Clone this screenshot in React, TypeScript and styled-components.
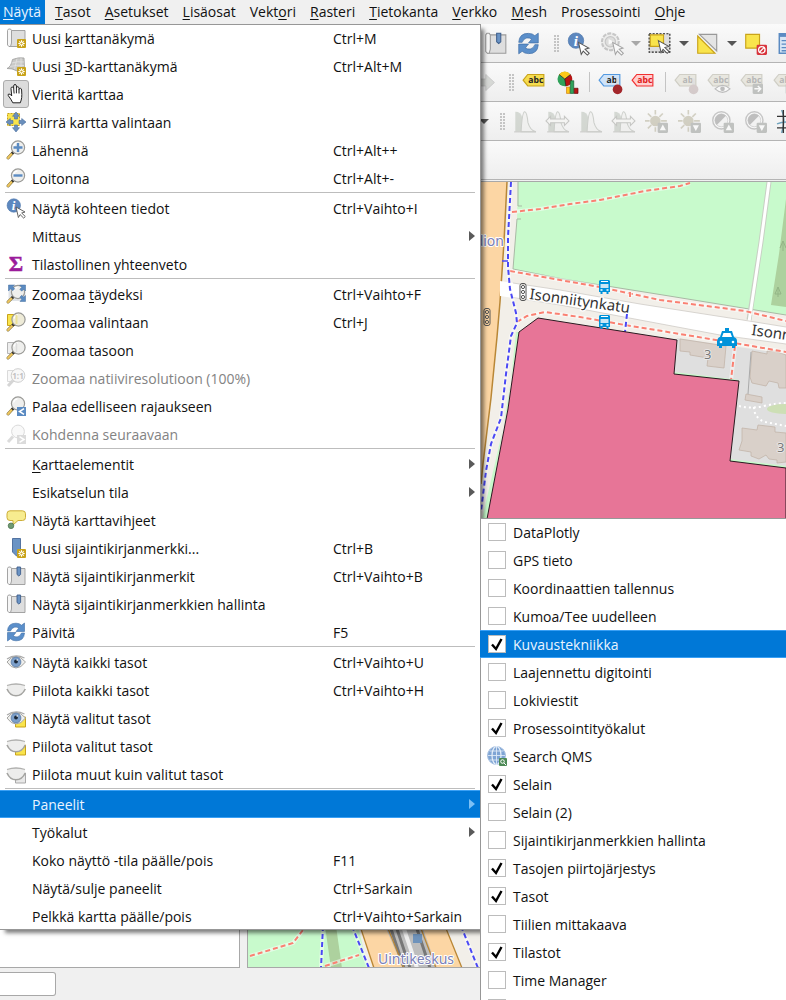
import React from "react";
import styled, { createGlobalStyle, css } from "styled-components";

const GlobalStyle = createGlobalStyle`
  *, *::before, *::after { box-sizing: border-box; }
  html, body { margin: 0; padding: 0; height: 100%; overflow: hidden; }
  body { background: #f0f0f0; }
  body, button, input {
    font-family: "Open Sans", "Noto Sans", sans-serif;
    font-size: 14px;
    line-height: 20px;
    color: #111;
  }
`;

/* ---------- Window frame ---------- */

const Window = styled.div`
  position: relative;
  display: flex;
  flex-direction: column;
  height: 100vh;
  overflow: hidden;
  background: #f0f0f0;
`;

const MenuBar = styled.nav`
  display: flex;
  flex: none;
  height: 24px;
  gap: 7px;
  background: #f0f0f0;
`;

const MenuBarItem = styled.button<{ $open?: boolean }>`
  border: 0;
  padding: 0 4px 0 ${(p) => (p.$open ? 3 : 3)}px;
  height: 24px;
  white-space: nowrap;
  background: ${(p) => (p.$open ? "#0078d7" : "transparent")};
  color: ${(p) => (p.$open ? "#e8f4ff" : "#111")};
`;

const Mark = styled.u`
  text-decoration-thickness: 1px;
  text-underline-offset: 2px;
`;

/* ---------- Toolbars ---------- */

const ToolBar = styled.div<{ $start: number }>`
  display: flex;
  flex: none;
  align-items: center;
  height: 39px;
  padding-left: ${(p) => p.$start}px;
  overflow: hidden;
  background: linear-gradient(#fafafa, #eeeeee);
  border-bottom: 1px solid #b4b4b4;
`;

const ToolButton = styled.button<{ $faded?: boolean }>`
  display: flex;
  flex: none;
  align-items: center;
  justify-content: center;
  width: 33px;
  height: 33px;
  padding: 0;
  border: 0;
  background: none;
  opacity: ${(p) => (p.$faded ? 0.5 : 1)};
`;

const DropArrow = styled.button<{ $faded?: boolean }>`
  display: flex;
  flex: none;
  align-items: center;
  justify-content: center;
  width: 15px;
  height: 33px;
  padding: 0;
  border: 0;
  background: none;
  &::before {
    content: "";
    border: 5px solid transparent;
    border-top-color: ${(p) => (p.$faded ? "#a8a8a8" : "#555")};
    border-bottom: 0;
  }
`;

const Grip = styled.span`
  flex: none;
  width: 17px;
  height: 17px;
  padding-left: 9px;
  padding-right: 3px;
  background: radial-gradient(circle at 1px 1px, #c4c4c4 1px, transparent 1px) content-box;
  background-size: 3px 3px;
`;

const ToolDivider = styled.span`
  flex: none;
  width: 10px;
  height: 20px;
  background: linear-gradient(#c4c4c4, #c4c4c4) 6px 0 / 1px 100% no-repeat;
`;

/* ---------- Work area ---------- */

const WorkArea = styled.main`
  display: flex;
  flex: 1;
  min-height: 0;
  gap: 7px;
  padding-top: 1px;
`;

const SidePanel = styled.aside`
  flex: none;
  width: 240px;
  background: #fff;
  border: 1px solid #a8a8a8;
  border-left: 0;
`;

const MapFrame = styled.section`
  flex: 1;
  min-width: 0;
  border: 1px solid #a8a8a8;
  border-right: 0;
  background: #f2efe9;
  svg { display: block; width: 100%; height: 100%; }
`;

const StatusBar = styled.footer`
  flex: none;
  height: 32px;
  padding-top: 4px;
`;

const Locator = styled.input`
  display: block;
  width: 56px;
  height: 24px;
  background: #fff;
  border: 1px solid #a8a8a8;
  border-left: 0;
  border-radius: 0 3px 3px 0;
  outline: 0;
`;

/* ---------- Menus ---------- */

const popup = css`
  position: absolute;
  display: flex;
  flex-direction: column;
  background: #fff;
`;

const ViewMenu = styled.div`
  ${popup}
  top: 24px;
  left: 0;
  width: 481px;
  box-shadow: inset 0 1px #979797, inset -1px -1px #979797, 4px 4px 4px -1px rgba(0, 0, 0, 0.5);
`;

const PanelMenu = styled.div`
  ${popup}
  top: 518px;
  left: 480px;
  right: 0;
  box-shadow: inset 1px 1px #979797;
`;

const selectedRow = css`
  background: #0078d7;
  color: #e8f4ff;
  box-shadow: inset 0 1px #3aa0f5, inset 0 -1px #3aa0f5;
`;

const MenuRow = styled.button<{ $selected?: boolean }>`
  display: grid;
  grid-template-columns: 32px 301px 1fr 12px;
  align-items: center;
  height: 28px;
  padding: 0;
  border: 0;
  background: none;
  text-align: left;
  white-space: nowrap;
  &:disabled { color: #838383; }
  ${(p) => p.$selected && selectedRow}
`;

const IconSlot = styled.span<{ $pressed?: boolean }>`
  display: flex;
  align-items: center;
  justify-content: center;
  width: 26px;
  height: 28px;
  margin-left: 3px;
  border-radius: 3px;
  ${(p) => p.$pressed && css`background: #dcdcdc; border: 1px solid #ababab;`}
`;

const RowText = styled.span`
  padding-top: 1px;
`;

const SubArrow = styled.span<{ $selected?: boolean }>`
  width: 0;
  border: 5px solid transparent;
  border-left: 6px solid ${(p) => (p.$selected ? "#7cc0f5" : "#5a5a5a")};
  border-right: 0;
`;

const Rule = styled.hr`
  flex: none;
  width: auto;
  height: 2px;
  margin: 0 6px 0 5px;
  border: 0;
  background: linear-gradient(#bdbdbd, #bdbdbd) 0 0 / 100% 1px no-repeat;
`;

const PanelRow = styled.label<{ $selected?: boolean }>`
  display: grid;
  grid-template-columns: 25px 1fr;
  align-items: center;
  height: 28px;
  padding-left: 8px;
  white-space: nowrap;
  ${(p) => p.$selected && selectedRow}
`;

const PanelAction = styled(PanelRow).attrs({ as: "button" })`
  border: 0;
  padding: 0 0 0 8px;
  background: none;
  text-align: left;
  svg { margin-left: -1px; }
`;

const TickBox = styled.span`
  display: grid;
  width: 18px;
  height: 18px;
  > * { grid-area: 1 / 1; }
  input {
    appearance: none;
    width: 18px;
    height: 18px;
    margin: 0;
    background: #fff;
    border: 1px solid #bcbcbc;
  }
  svg { visibility: hidden; pointer-events: none; }
  input:checked + svg { visibility: visible; }
`;

/* ---------- Icons, drawn on a 20 x 20 grid ---------- */

const NewBadge = () => (
  <g>
    <rect x="11" y="11" width="9" height="9" rx="1" fill="#c9a31a" />
    <path d="M15.5 12.3v6.4M12.3 15.5h6.4M13.3 13.3l4.4 4.4M17.7 13.3l-4.4 4.4" stroke="#fff" strokeWidth="1.1" />
    <circle cx="15.5" cy="15.5" r="1.1" fill="#c9a31a" />
  </g>
);

const Sheet = () => (
  <g stroke="#9a9a9a" strokeWidth="0.9">
    <path d="M5 2.5h14v16H3z" fill="#dedede" />
    <path d="M1.500 2.500L2.500 1h2l1 1.500V15L4.500 18.500H3L1.500 17z" fill="#f6f6f6" />
  </g>
);

const Lens = ({ fill = "#efefed", x = 12, y = 7.5 }) => (
  <g>
    <path d={`M${x - 4.5} ${y + 4.5}L2 18`} stroke="#7a6a35" strokeWidth="3" strokeLinecap="round" />
    <path d={`M${x - 6} ${y + 6}L2 18`} stroke="#f0c860" strokeWidth="1.900" strokeLinecap="round" />
    <path d={`M${x - 4.5} ${y + 4.5}l-1.600 1.600`} stroke="#333" strokeWidth="2.600" />
    <circle cx={x} cy={y} r="6.6" fill={fill} stroke="#9a9a97" strokeWidth="1.200" />
    <path d={`M${x - 4.5} ${y - 1}a4.600 4.600 0 0 1 4-3.600`} stroke="#fff" strokeWidth="1.200" />
  </g>
);

const Cursor = ({ x = 10, y = 9 }) => (
  <path
    transform={`translate(${x} ${y})`}
    d="M0 0l9 5-3.300 1 3.600 3.500-1.600 1.600-3.600-3.500L2.400 10.500z"
    fill="#fff"
    stroke="#555"
    strokeWidth="0.9"
  />
);

const Eye = () => (
  <g>
    <path d="M1 10Q5 4.500 10 4.500T19.500 10Q15 16 10 16T1 10z" fill="#efefed" stroke="#a5a5a2" strokeWidth="1" />
    <path d="M1 7Q9 1.500 18.500 6" fill="none" stroke="#aaa" strokeWidth="1.200" />
    <circle cx="10" cy="10" r="4.900" fill="#7c9fca" stroke="#5b7ba4" strokeWidth="0.8" />
    <circle cx="10" cy="9.500" r="1.900" fill="#1b2838" />
    <circle cx="11.200" cy="8" r="0.8" fill="#fff" />
  </g>
);

const Lid = () => (
  <g>
    <path d="M1 5.500Q10 2.500 19 5.500V9Q16 16 10 16T1 9z" fill="#ededec" />
    <path d="M1 5.500Q10 2.500 19 5.500" fill="none" stroke="#b0b0ae" strokeWidth="1.300" />
    <path d="M1 9Q4 15.800 10 15.800T19.300 9" fill="none" stroke="#a4a4a1" strokeWidth="1.600" />
  </g>
);

const Tag = ({ fill = "#f5dc4e", stroke = "#c9a31a", text = "#222", label = "abc" }) => (
  <g>
    <path d="M1 8l4-5h14v10H5z" fill={fill} stroke={stroke} strokeWidth="1" />
    <text x="12" y="10.6" textAnchor="middle" fontFamily="Open Sans, sans-serif" fontSize="7.5" fontWeight="700" fill={text}>
      {label}
    </text>
  </g>
);

const CornerBadge = ({ children }: { children: React.ReactNode }) => (
  <g>
    <rect x="11" y="11" width="9" height="9" rx="1" fill="#8f938f" />
    {children}
  </g>
);

const Histogram = () => (
  <g>
    <path d="M2 19V1.5q5 0 6 5L10 19z" fill="#b4bcb1" />
    <path d="M7 19Q8 2 10 1.5T13 11q2 7 7 8z" fill="#eeeeec" stroke="#a5aaa2" strokeWidth="0.9" />
    <path d="M1 19h19" stroke="#a9aaa5" />
  </g>
);

const SideArrows = () => (
  <path d="M0 9.500l4-4v2.400h12V5.500l4 4-4 4V11H4v2.500z" fill="#f4f4f2" stroke="#999a95" strokeWidth="0.9" />
);

const Sun = () => (
  <g>
    <path d="M9 0v4M9 15v4M0 9.500h4M2.500 3l3 3M15.500 3l-3 3M2.500 16l3-3M14 9.500h5" stroke="#b0ab91" strokeWidth="1.400" />
    <circle cx="9" cy="9.500" r="4.600" fill="#b0ab91" />
  </g>
);

const Contrast = () => (
  <g>
    <circle cx="9" cy="9" r="7.500" fill="#fff" stroke="#999" strokeWidth="1.200" />
    <circle cx="9" cy="9" r="5.600" fill="#f2f2f2" stroke="#aaa" strokeWidth="0.700" />
    <path d="M5 13A5.600 5.600 0 0 1 13 5z" fill="#8a8a8a" />
  </g>
);

const UpBadge = () => <CornerBadge><path d="M15.500 12.700l2.700 5h-5.400z" fill="#fff" /></CornerBadge>;
const DownBadge = () => <CornerBadge><path d="M15.500 18.300l2.700-5h-5.400z" fill="#fff" /></CornerBadge>;

const drawings: Record<string, React.ReactNode> = {
  newMap: <><Sheet /><NewBadge /></>,
  newMap3d: (
    <>
      <path d="M1 12.500Q5 11 6.500 3.500q6-2.500 11.500-1.500l.5 11L11 15Q6 12 1 12.500z" fill="#c9c9c7" stroke="#a3a3a1" strokeWidth="0.9" />
      <path d="M5.500 7q6-2 12.500-1M4 10.500q7-2 14-1M11 2.500L8.500 13M15 2v10" stroke="#e6e6e6" strokeWidth="0.7" fill="none" />
      <NewBadge />
    </>
  ),
  hand: (
    <path
      d="M6.800 18.800Q5 15 2.300 11.700q-.8-1.500.7-1.700 1.500 0 2.700 2L5 4.500q0-1.500 1.200-1.500T7.700 4.500V2q0-1.500 1.300-1.500T10.400 2v2q.2-1.500 1.400-1.300T13 4.300v1q.3-1.200 1.400-1T15.600 6q.4 5 .1 7.500t-1.400 5.300zM7.700 4.500l.4 5M10.400 4v5.300M13 5v4.500"
      fill="#fff"
      stroke="#222"
      strokeWidth="1"
      strokeLinejoin="round"
    />
  ),
  panSelection: (
    <>
      <path d="M1.500 1.500h12v12h-12z" fill="#f9e44c" stroke="#c9a31a" strokeDasharray="2 1" />
      <path d="M10 0l3.500 4.300h-2V7h-3V4.300h-2zM10 20l3.500-4.300h-2V13h-3v2.700h-2zM0 10l4.300-3.500v2H7v3H4.300v2zM20 10l-4.300-3.500v2H13v3h2.700v2z" fill="#6a8fbd" stroke="#4a6f9e" strokeWidth="0.6" />
    </>
  ),
  zoomIn: <><Lens /><path d="M12 3v9M7.500 7.500h9" stroke="#5b8bc2" strokeWidth="2.400" /></>,
  zoomOut: <><Lens /><path d="M7.500 7.500h9" stroke="#5b8bc2" strokeWidth="2.400" /></>,
  identify: (
    <>
      <circle cx="7.800" cy="7.500" r="6.700" fill="#5d88bf" stroke="#4a74aa" strokeWidth="0.6" />
      <text x="7.600" y="12" textAnchor="middle" fontFamily="Liberation Serif, serif" fontSize="13" fontStyle="italic" fontWeight="700" fill="#fff">i</text>
      <Cursor />
    </>
  ),
  sigma: (
    <text x="10" y="17" textAnchor="middle" fontFamily="Liberation Serif, serif" fontSize="22" fontWeight="700" fill="#9b1b9b" stroke="#9b1b9b" strokeWidth="0.5">Σ</text>
  ),
  zoomFull: (
    <>
      <path d="M2.500 1h17v16h-17z" fill="#dfe3e8" />
      <Lens y={8} />
      <path d="M2.500 1h6L6.700 2.800l2 2L6.800 6.700l-2-2L2.500 7zM19.500 1v6l-1.800-1.800-2 2-1.900-1.900 2-2L13.500 1zM19.500 17.500v-6l-1.800 1.800-2-2-1.900 1.900 2 2-1.800 2.300z" fill="#5b8bc2" stroke="#456f9f" strokeWidth="0.5" />
    </>
  ),
  zoomSelection: (
    <>
      <path d="M1.500 2.500h9v11h-9z" fill="#f9e44c" stroke="#c9a31a" />
      <Lens x={12.500} fill="#eeebd8" />
      <path d="M10.500 3v9" stroke="#ece29a" strokeWidth="2" />
    </>
  ),
  zoomLayer: (
    <>
      <path d="M1.500 2.500h9v11h-9z" fill="#eee" stroke="#b5b5b5" />
      <Lens x={12.500} />
      <path d="M10.500 3v9" stroke="#ddd" strokeWidth="1.500" />
    </>
  ),
  zoomNative: (
    <g opacity="0.4">
      <path d="M1.500 2.500h9v11h-9z" fill="#eee" stroke="#a5a5a5" />
      <path d="M7 12.500L2 18" stroke="#999" strokeWidth="3" />
      <circle cx="12" cy="7.500" r="6.800" fill="#eee" stroke="#888" />
      <text x="12" y="10.500" textAnchor="middle" fontFamily="Open Sans, sans-serif" fontSize="8" fontWeight="700" fill="#666">1:1</text>
    </g>
  ),
  zoomLast: (
    <>
      <Lens />
      <rect x="11" y="11" width="9" height="9" fill="#5b8bc2" />
      <path d="M18 12.700l-4.500 2.800 4.500 2.800" stroke="#fff" strokeWidth="1.500" fill="none" />
    </>
  ),
  zoomNext: (
    <g opacity="0.35">
      <path d="M7 12.500L2 18" stroke="#999" strokeWidth="3" />
      <circle cx="12" cy="7.500" r="6.400" fill="#eee" stroke="#999" />
      <rect x="11" y="11" width="9" height="9" fill="#999" />
      <path d="M13.500 12.700l4.500 2.800-4.500 2.800" stroke="#fff" strokeWidth="1.500" fill="none" />
    </g>
  ),
  mapTips: (
    <>
      <path d="M4 .8h12.500q3 0 3 3V7.500q0 3-3 3H12L7 15V10.500H4q-3 0-3-3V3.800q0-3 3-3z" fill="#f7ec8f" stroke="#cdae38" />
      <circle cx="5" cy="15.800" r="2.800" fill="#6f9a72" stroke="#4f7552" strokeWidth="0.8" />
    </>
  ),
  newBookmark: (
    <>
      <path d="M6.500.5h8v17.500h-4l-4-4z" fill="#6a93c4" stroke="#48699a" strokeWidth="0.9" />
      <NewBadge />
    </>
  ),
  bookmarks: (
    <>
      <Sheet />
      <path d="M11 1h3.600v7.500l-1.800 1.500L11 8.500z" fill="#6a93c4" stroke="#3f5f8c" strokeWidth="0.9" />
    </>
  ),
  refresh: (
    <>
      <path d="M1.500 9Q2 1 10 1.200q3.500 0 5.500 2L18.500 1v8.500H10l2.700-3.300Q11 4.800 8.500 5.200 5.500 5.800 4.500 9z" fill="#5b8fca" stroke="#3f6ea6" strokeWidth="0.6" />
      <path d="M18.500 11Q18 19 10 18.800q-3.500 0-5.500-2L1.500 19v-8.500H10l-2.700 3.300q1.700 1.400 4.200 1 3-.6 4-3.800z" fill="#5b8fca" stroke="#3f6ea6" strokeWidth="0.6" />
    </>
  ),
  eye: <Eye />,
  lid: <Lid />,
  eyeSelected: <><path d="M9.500 9h10v10h-10z" fill="#f9e44c" stroke="#c9a31a" /><Eye /></>,
  lidSelected: <><path d="M9.500 9h10v10h-10z" fill="#f9e44c" stroke="#c9a31a" /><Lid /></>,
  lidOthers: <><path d="M9.500 9h10v10h-10z" fill="#e8e8e8" stroke="#a9a9a9" /><Lid /></>,
  qms: (
    <>
      <circle cx="9.500" cy="9.500" r="9" fill="#7ea4d4" stroke="#a9c2e2" />
      <path d="M9.500.5v18M1 9.500h17M2.500 5h14M2.500 14h14" stroke="#dbe8f6" strokeWidth="0.9" />
      <ellipse cx="9.500" cy="9.500" rx="4.500" ry="9" fill="none" stroke="#e6eff9" strokeWidth="1.200" />
      <rect x="12" y="12" width="8" height="8" rx="1" fill="#4d8a56" />
      <circle cx="15.500" cy="15.500" r="1.800" fill="none" stroke="#fff" />
      <path d="M17 17l2 2" stroke="#fff" />
    </>
  ),
  runAction: (
    <>
      <circle cx="9" cy="8.500" r="7.300" fill="#e6e6e4" stroke="#999" strokeWidth="1.800" strokeDasharray="3.500 1" />
      <circle cx="9" cy="8.500" r="4.500" fill="#c8c8c6" stroke="#999" />
      <path d="M7.500 6l4.500 2.500L7.500 11z" fill="#fff" />
      <Cursor x={11} y={9} />
    </>
  ),
  select: (
    <>
      <path d="M1 1.500h18v16H1z" fill="#dedede" stroke="#222" strokeDasharray="1.800 1.200" />
      <path d="M2 2.500h11.500v10H2z" fill="#f9e44c" stroke="#c9a31a" />
      <Cursor x={9} y={7.500} />
    </>
  ),
  selectValue: (
    <>
      <path d="M3 2h15v14.500z" fill="#e4e4e4" stroke="#999" />
      <path d="M1.500 3.500l15 15h-15z" fill="#f9e44c" stroke="#c9a31a" />
    </>
  ),
  deselect: (
    <>
      <path d="M1.500 2h12v12h-12z" fill="#f9e44c" stroke="#c9a31a" />
      <rect x="11" y="11" width="9" height="9" rx="1" fill="#d8343c" />
      <circle cx="15.500" cy="15.500" r="2.800" fill="none" stroke="#fff" strokeWidth="1.100" />
      <path d="M13.600 17.400l3.800-3.800" stroke="#fff" strokeWidth="1.100" />
    </>
  ),
  table: (
    <>
      <path d="M2 1.500h16v17H2z" fill="#d8e6f5" stroke="#5b8bc2" strokeWidth="1.300" />
      <path d="M2 3h16" stroke="#5b8bc2" strokeWidth="2.500" />
      <path d="M4 7.500h12M4 10.500h12M4 13.500h12M4 16.300h12" stroke="#5b8bc2" strokeWidth="1.100" />
    </>
  ),
  forward: <path d="M2 7h10V3l7.500 7-7.500 7v-4H2z" fill="#b9bdb7" stroke="#999" strokeWidth="0.7" />,
  label: <Tag />,
  diagram: (
    <>
      <circle cx="8.500" cy="7" r="6.300" fill="#2fa25a" />
      <path d="M8.500 7l-5-4a6.300 6.300 0 0 1 10 0z" fill="#fcc818" />
      <path d="M8.500 7l5-4a6.300 6.300 0 0 1-4 10.300z" fill="#b81414" />
      <path d="M8.500 7l-5-4M8.500 7l5-4M8.500 7l1 6.300" stroke="#222" strokeWidth="0.6" />
      <path d="M10 14h3v5.500h-3z" fill="#fcc818" stroke="#d27e10" strokeWidth="0.6" />
      <path d="M13.300 8.500h3v11h-3z" fill="#2fa25a" stroke="#185c30" strokeWidth="0.6" />
      <path d="M16.700 15h3.300v4.500h-3.300z" fill="#b81414" stroke="#5c0808" strokeWidth="0.6" />
    </>
  ),
  pinLabel: (
    <>
      <Tag fill="#cfe3f8" stroke="#5399e0" label="ab" />
      <path d="M17 6.500v7" stroke="#ddd" strokeWidth="2.200" />
      <circle cx="17" cy="16" r="4.200" fill="#a3262b" />
    </>
  ),
  unplaced: <Tag fill="#ffcfcf" stroke="#f23030" text="#e01818" />,
  pinFaded: (
    <>
      <Tag fill="#dcdacb" stroke="#aba896" text="#777" label="ab" />
      <path d="M17 6.500v7" stroke="#ccc" strokeWidth="2.200" />
      <circle cx="17" cy="16" r="4.200" fill="#b9a5a5" />
    </>
  ),
  showFaded: (
    <>
      <Tag fill="#dcdacb" stroke="#aba896" text="#777" />
      <path d="M7 15.500q6.500-6 13 0-6.500 6-13 0z" fill="#fff" stroke="#888" />
      <circle cx="13.500" cy="15.500" r="2" fill="#888" />
    </>
  ),
  moveFaded: (
    <>
      <Tag fill="#dcdacb" stroke="#aba896" text="#777" />
      <CornerBadge><path d="M12.500 15.500h5M15.500 13l2.500 2.500-2.500 2.500" stroke="#fff" strokeWidth="1.300" fill="none" /></CornerBadge>
    </>
  ),
  stretch: <Histogram />,
  stretchWide: <><Histogram /><SideArrows /></>,
  brighter: <><Sun /><UpBadge /></>,
  darker: <><Sun /><DownBadge /></>,
  contrastUp: <><Contrast /><UpBadge /></>,
  contrastDown: <><Contrast /><DownBadge /></>,
  mesh: (
    <>
      <path d="M4 0q4 8 0 20M0 12q10-4 20 2" stroke="#6fa3bd" strokeWidth="1.200" fill="none" />
      <path d="M5.500 0v20M14 0v20M0 5.500h20M0 15.500h20" stroke="#333" strokeWidth="1.200" fill="none" />
    </>
  ),
};

const Icon = ({ name, size = 20 }: { name: string; size?: number }) => (
  <svg width={size} height={size} viewBox="0 0 20 20" fill="none" overflow="visible" aria-hidden="true">
    {drawings[name]}
  </svg>
);

/* ---------- Data ---------- */

const barItems = ["_Näytä", "_Tasot", "_Asetukset", "_Lisäosat", "Vekt_ori", "_Rasteri", "_Tietokanta", "_Verkko", "_Mesh", "Prosessointi", "_Ohje"];

type Entry = { text: string; icon?: string; keys?: string; sub?: boolean; off?: boolean; pressed?: boolean; selected?: boolean };

const viewGroups: Entry[][] = [
  [
    { text: "Uusi _karttanäkymä", icon: "newMap", keys: "Ctrl+M" },
    { text: "Uusi _3D-karttanäkymä", icon: "newMap3d", keys: "Ctrl+Alt+M" },
    { text: "Vieritä karttaa", icon: "hand", pressed: true },
    { text: "Siirrä kartta valintaan", icon: "panSelection" },
    { text: "Lähennä", icon: "zoomIn", keys: "Ctrl+Alt++" },
    { text: "Loitonna", icon: "zoomOut", keys: "Ctrl+Alt+-" },
  ],
  [
    { text: "Näytä kohteen tiedot", icon: "identify", keys: "Ctrl+Vaihto+I" },
    { text: "Mittaus", sub: true },
    { text: "Tilastollinen yhteenveto", icon: "sigma" },
  ],
  [
    { text: "Zoomaa _täydeksi", icon: "zoomFull", keys: "Ctrl+Vaihto+F" },
    { text: "Zoomaa valintaan", icon: "zoomSelection", keys: "Ctrl+J" },
    { text: "Zoomaa tasoon", icon: "zoomLayer" },
    { text: "Zoomaa natiiviresolutioon (100%)", icon: "zoomNative", off: true },
    { text: "Palaa edelliseen rajaukseen", icon: "zoomLast" },
    { text: "Kohdenna seuraavaan", icon: "zoomNext", off: true },
  ],
  [
    { text: "_Karttaelementit", sub: true },
    { text: "Esikatselun tila", sub: true },
    { text: "Näytä karttavihjeet", icon: "mapTips" },
    { text: "Uusi sijaintikirjanmerkki...", icon: "newBookmark", keys: "Ctrl+B" },
    { text: "Näytä sijaintikirjanmerkit", icon: "bookmarks", keys: "Ctrl+Vaihto+B" },
    { text: "Näytä sijaintikirjanmerkkien hallinta", icon: "bookmarks" },
    { text: "Päivitä", icon: "refresh", keys: "F5" },
  ],
  [
    { text: "Näytä kaikki tasot", icon: "eye", keys: "Ctrl+Vaihto+U" },
    { text: "Piilota kaikki tasot", icon: "lid", keys: "Ctrl+Vaihto+H" },
    { text: "Näytä valitut tasot", icon: "eyeSelected" },
    { text: "Piilota valitut tasot", icon: "lidSelected" },
    { text: "Piilota muut kuin valitut tasot", icon: "lidOthers" },
  ],
  [
    { text: "Paneelit", sub: true, selected: true },
    { text: "Työkalut", sub: true },
    { text: "Koko näyttö -tila päälle/pois", keys: "F11" },
    { text: "Näytä/sulje paneelit", keys: "Ctrl+Sarkain" },
    { text: "Pelkkä kartta päälle/pois", keys: "Ctrl+Vaihto+Sarkain" },
  ],
];

const panels: { text: string; on?: boolean; selected?: boolean; icon?: string }[] = [
  { text: "DataPlotly" },
  { text: "GPS tieto" },
  { text: "Koordinaattien tallennus" },
  { text: "Kumoa/Tee uudelleen" },
  { text: "Kuvaustekniikka", on: true, selected: true },
  { text: "Laajennettu digitointi" },
  { text: "Lokiviestit" },
  { text: "Prosessointityökalut", on: true },
  { text: "Search QMS", icon: "qms" },
  { text: "Selain", on: true },
  { text: "Selain (2)" },
  { text: "Sijaintikirjanmerkkien hallinta" },
  { text: "Tasojen piirtojärjestys", on: true },
  { text: "Tasot", on: true },
  { text: "Tiilien mittakaava" },
  { text: "Tilastot", on: true },
  { text: "Time Manager" },
];

/* "_" stands before the letter that is the keyboard mnemonic. */
const Label = ({ text }: { text: string }) => {
  const at = text.indexOf("_");
  if (at < 0) return <>{text}</>;
  return <>{text.slice(0, at)}<Mark>{text[at + 1]}</Mark>{text.slice(at + 2)}</>;
};

const Tool = ({ icon, label, faded }: { icon: string; label: string; faded?: boolean }) => (
  <ToolButton type="button" aria-label={label} $faded={faded}><Icon name={icon} size={23} /></ToolButton>
);

const Tick = ({ on, name }: { on?: boolean; name?: string }) => (
  <TickBox>
    <input type="checkbox" defaultChecked={on} aria-label={name} />
    <svg width="18" height="18" viewBox="0 0 18 18" fill="none">
      <path d="M4 9.500l4 4.500L13.500 4" stroke="#000" strokeWidth="2.400" />
    </svg>
  </TickBox>
);

/* ---------- Map ---------- */

const Bus = ({ x, y }: { x: number; y: number }) => (
  <g transform={`translate(${x} ${y})`}>
    <path d="M1 0h9l1 1v11h-1.500v2H7.500v-2h-4v2h-2v-2H0V1z" fill="#0092da" />
    <path d="M2 1.500h7" stroke="#fff" strokeWidth="1" />
    <path d="M1.500 4h8v4h-8z" fill="#cbe6f4" />
    <path d="M1.500 10h2M7.500 10h2" stroke="#fff" strokeWidth="1.300" />
  </g>
);

const Signal = ({ x, y }: { x: number; y: number }) => (
  <g transform={`translate(${x} ${y})`} stroke="#555" fill="none">
    <rect x="1" y="0.500" width="6" height="17" rx="2" />
    <circle cx="4" cy="4" r="1.600" /><circle cx="4" cy="9" r="1.600" /><circle cx="4" cy="14" r="1.600" />
  </g>
);

const FootPath = ({ d }: { d: string }) => (
  <g fill="none">
    <path d={d} stroke="#fff" strokeWidth="4" opacity="0.5" />
    <path d={d} stroke="#fa8072" strokeWidth="2" strokeDasharray="5 3" />
  </g>
);

const CyclePath = ({ d }: { d: string }) => (
  <g fill="none">
    <path d={d} stroke="#fff" strokeWidth="4" opacity="0.5" />
    <path d={d} stroke="#4a48f5" strokeWidth="2" strokeDasharray="5 3" />
  </g>
);

const halo = { paintOrder: "stroke", strokeLinejoin: "round" } as const;

const CityMap = () => (
  <svg viewBox="248 181 538 786" preserveAspectRatio="xMinYMin slice" role="img" aria-label="Kartta" fontFamily="Noto Sans, sans-serif">
    <path d="M248 181h538v786H248z" fill="#f2efe9" />

    {/* Park and wood */}
    <path d="M518 181l-1 37-4 50 40 9 110 17 80 13 43 7V181z" fill="#c8facc" />
    <path d="M518 181v24h4M521 218h-4l-4 50 50 10 100 16 80 13 43 7" fill="none" stroke="#a9b9a5" strokeWidth="1" />
    <path d="M786 198l-7 55-8 51 15 2z" fill="#add19e" />
    <path d="M783 240v10m0 -10l-3 7m3-7l3 7M778 286v10m0-10l-3 7h6z" stroke="#93b586" fill="none" />
    <path d="M769 181l-8 60-12 78" stroke="#c8cfc4" strokeWidth="5" fill="none" />
    <path d="M769 181l-8 60-12 80" stroke="#fff" strokeWidth="3" fill="none" />

    {/* Main road on the left */}
    <path d="M470 181h37l-3 60-4 60-3 35-6 61-8 66-2 20h-11z" fill="#fcd6a4" />
    <path d="M507 181l-3 60-4 60-3 35-6 61-8 66-2 20" stroke="#b98736" strokeWidth="1.500" fill="none" />

    {/* Residential street */}
    <path d="M500 280l60 9 80 14 109 17 37 6v17l-66-9-80-15-80-15-60-9z" fill="#fff" />
    <path d="M513 282l47 7 80 14 109 17 37 6M786 343l-66-9-80-15-80-15-50-8" fill="none" stroke="#cfccc6" strokeWidth="0.800" />

    {/* Yards and buildings */}
    <path d="M677 337l109 16v114l-57-8 9-79-64-8z" fill="#dfdfdf" />
    <g fill="#d9d0c9" stroke="#c3b5aa" strokeWidth="0.800">
      <path d="M680 338l46 7-2 22-17-2 1-8-18-3v-3l-10-1z" />
      <path d="M752 350l15 3v-3h8l11 4v33h-7l-1-5-9-2-3 5-14-3-2-6z" />
      <path d="M746 393l16 3v6l-17-3z" />
      <path d="M742 427l15 2 1-5 17 2v5l11 1v29l-9 1v-3l-8-1-3-4-7 4-8-3v-4l-12-2 3-9z" />
    </g>
    <path d="M751 351l-3 42" stroke="#aaa" />
    <path d="M739 405q12 3 25 0t22-3M754 406q0 11 11 15l21 4" stroke="#fff" strokeWidth="2" strokeDasharray="2 3" fill="none" />
    <ellipse cx="785" cy="408" rx="18" ry="5" fill="#cddfb5" />

    {/* Paths */}
    <FootPath d="M512 211l28-3 30-5 30-4 45-9 35-5 10-3" />
    <FootPath d="M510 270l50 9 40 7 60 13 85 11 41 10" />
    <FootPath d="M517 321l10-6 18-4 35 5 45 8 55 9 60 10 46 8" />
    <FootPath d="M735 345l-4 34" />
    <FootPath d="M630 291v6" />
    <CyclePath d="M511 181l-3 55v30l2 22 6 24 1 10-6 13-5 38-5 44-10 26-5 27-5 40" />
    <CyclePath d="M627 313l-2 18" />
    <path d="M502 260h6" stroke="#4a48f5" strokeWidth="1.500" />

    {/* Selected area */}
    <path d="M519 331l-3 0-8 75-26 112h6z" fill="#c8facc" />
    <path d="M674 371l65 8-9 79 56 7v4h-60z" fill="#c8facc" />
    <path d="M538 317l139 22-3 34 65 7-9 80 56 7v51H487l21-110 11-77z" fill="#e77597" stroke="#2a1a20" />

    <Signal x={519} y={282} />
    <Signal x={483} y={307} />
    <Bus x={599} y={279} />
    <Bus x={599} y={314} />
    <path d="M717 340q1-4 3-4l2-6h3v-3h4v3h3l2 6q3 1 3 4v5h-2v2h-3v-2h-10v2h-3v-2h-2z" fill="#0092da" />
    <path d="M722 336l1.500-4h7l1.500 4z" fill="#fff" />
    <circle cx="721" cy="341" r="1.300" fill="#fff" /><circle cx="733" cy="341" r="1.300" fill="#fff" />

    <g fill="#333" stroke="#fff" strokeWidth="2.500" fontSize="15" style={halo}>
      <text transform="translate(529 298) rotate(8)">Isonniitynkatu</text>
      <text transform="translate(751 334) rotate(8)">Isonniitynkatu</text>
    </g>
    <g fill="#777" stroke="#eee" strokeWidth="1.500" fontSize="13" style={halo}>
      <text x="704" y="358">3</text>
      <text x="777" y="451">3</text>
    </g>

    {/* Southern part: main road, railway and station */}
    <path d="M248 900h104l16 67H248z" fill="#c8facc" />
    <path d="M325 925h11l6 42h-11z" fill="#add19e" />
    <path d="M360 925h27l17 42h-31z" fill="#fcd6a4" />
    <path d="M420 925h25l17 42h-26z" fill="#fcd6a4" />
    <path d="M385 925h37l15 42h-34z" fill="#bdbdbd" />
    <path d="M390 925l14 42M396 925l14 42M416 925l14 42" stroke="#777" strokeWidth="3" />
    <path d="M403 925l14 42" stroke="#eee" strokeWidth="4" />
    <path d="M360 925l14 42M387 925l17 42M420 925l16 42M445 925l17 42" stroke="#b98736" strokeWidth="1.300" />
    <path d="M413 933h9v9h-9z" fill="#6f93bb" />
    <FootPath d="M250 955l43-13 10-13" />
    <FootPath d="M325 965l34-11" />
    <CyclePath d="M323 925l-2 42" />
    <CyclePath d="M352 925l17 42" />
    <CyclePath d="M461 925l17 42" />
    <g fill="#7a80b8" stroke="#fff" strokeWidth="2" fontSize="14" style={halo}>
      <text x="378" y="963">Uintikeskus</text>
      <text x="504" y="245" textAnchor="end">Stadion</text>
    </g>
  </svg>
);

/* ---------- Application ---------- */

export default function App() {
  return (
    <Window>
      <GlobalStyle />
      <MenuBar>
        {barItems.map((text, i) => (
          <MenuBarItem type="button" key={text} $open={i === 0}><Label text={text} /></MenuBarItem>
        ))}
      </MenuBar>

      <ToolBar $start={479}>
        <Tool icon="bookmarks" label="Kirjanmerkit" />
        <Tool icon="refresh" label="Päivitä" />
        <Grip />
        <Tool icon="identify" label="Kohteen tiedot" />
        <Tool icon="runAction" label="Suorita toiminto" faded />
        <DropArrow type="button" aria-label="Toiminnot" $faded />
        <Tool icon="select" label="Valitse kohteita" />
        <DropArrow type="button" aria-label="Valintatavat" />
        <Tool icon="selectValue" label="Valitse arvon mukaan" />
        <DropArrow type="button" aria-label="Valintaehdot" />
        <Tool icon="deselect" label="Poista valinnat" />
        <Tool icon="table" label="Attribuuttitaulu" />
      </ToolBar>

      <ToolBar $start={467}>
        <Tool icon="forward" label="Seuraava" faded />
        <Grip />
        <Tool icon="label" label="Nimiöinti" />
        <Tool icon="diagram" label="Kaaviot" />
        <ToolDivider />
        <Tool icon="pinLabel" label="Korosta kiinnitetyt" />
        <Tool icon="unplaced" label="Sijoittamattomat nimiöt" />
        <ToolDivider />
        <Tool icon="pinFaded" label="Kiinnitä nimiö" faded />
        <Tool icon="showFaded" label="Näytä nimiö" faded />
        <Tool icon="moveFaded" label="Siirrä nimiö" faded />
        <Tool icon="moveFaded" label="Kierrä nimiö" faded />
      </ToolBar>

      <ToolBar $start={476}>
        <DropArrow type="button" aria-label="Lisää" />
        <Grip />
        <Tool icon="stretch" label="Paikallinen venytys" faded />
        <Tool icon="stretchWide" label="Koko venytys" faded />
        <Tool icon="stretch" label="Paikallinen kumulatiivinen venytys" faded />
        <Tool icon="stretchWide" label="Koko kumulatiivinen venytys" faded />
        <Tool icon="brighter" label="Lisää kirkkautta" faded />
        <Tool icon="darker" label="Vähennä kirkkautta" faded />
        <Tool icon="contrastUp" label="Lisää kontrastia" faded />
        <Tool icon="contrastDown" label="Vähennä kontrastia" faded />
        <Tool icon="mesh" label="Georeferointi" />
      </ToolBar>

      <ToolBar $start={0} />

      <WorkArea>
        <SidePanel />
        <MapFrame><CityMap /></MapFrame>
      </WorkArea>

      <StatusBar>
        <Locator type="text" aria-label="Haku" />
      </StatusBar>

      <ViewMenu>
        {viewGroups.map((group, g) => (
          <React.Fragment key={g}>
            {g > 0 && <Rule />}
            {group.map((row) => (
              <MenuRow type="button" key={row.text} disabled={row.off} $selected={row.selected}>
                <IconSlot $pressed={row.pressed}>{row.icon && <Icon name={row.icon} />}</IconSlot>
                <RowText><Label text={row.text} /></RowText>
                <RowText>{row.keys}</RowText>
                {row.sub && <SubArrow $selected={row.selected} />}
              </MenuRow>
            ))}
          </React.Fragment>
        ))}
      </ViewMenu>

      <PanelMenu>
        {panels.map((panel) =>
          panel.icon ? (
            <PanelAction key={panel.text}>
              <Icon name={panel.icon} />
              <RowText>{panel.text}</RowText>
            </PanelAction>
          ) : (
            <PanelRow key={panel.text} $selected={panel.selected}>
              <Tick on={panel.on} />
              <RowText>{panel.text}</RowText>
            </PanelRow>
          )
        )}
        <PanelRow><Tick name="Yleiskuva" /></PanelRow>
      </PanelMenu>
    </Window>
  );
}
